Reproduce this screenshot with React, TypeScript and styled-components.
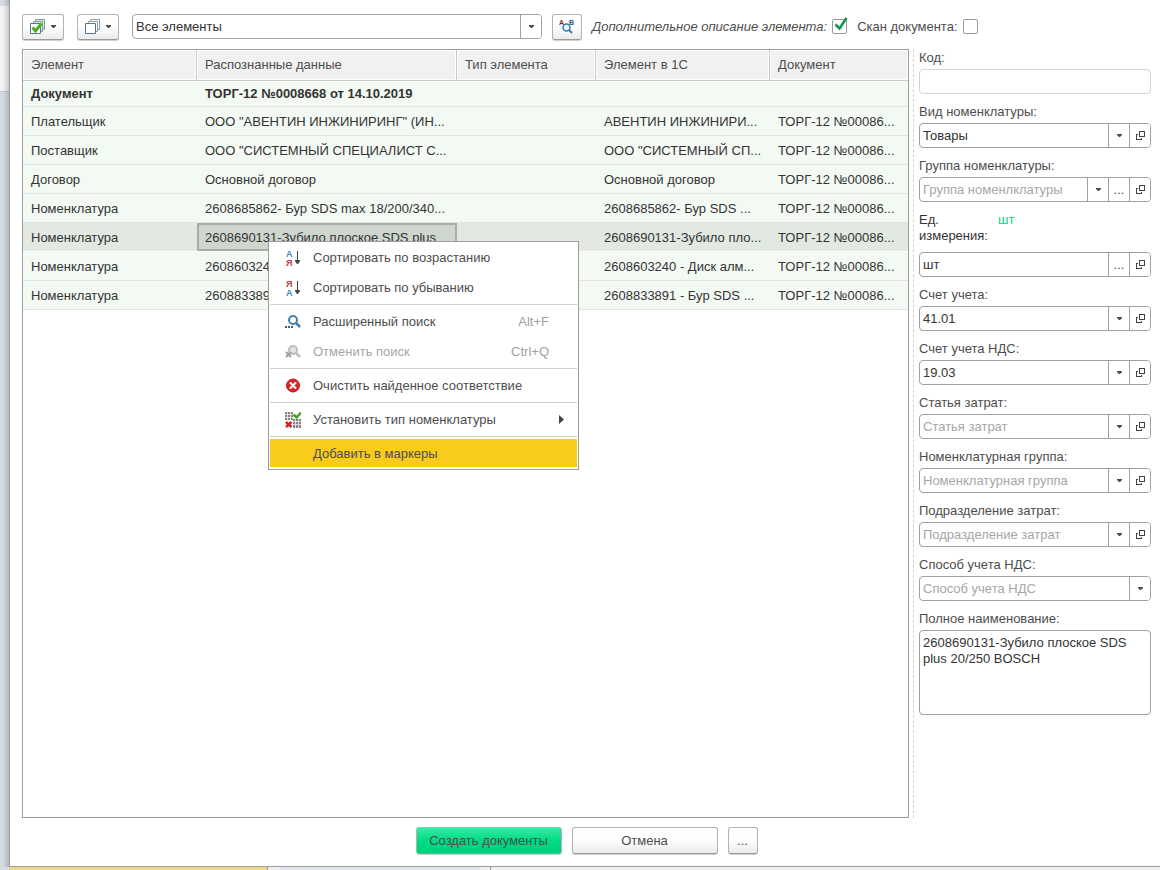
import React from "react";
import styled, { createGlobalStyle, css } from "styled-components";

const GlobalStyle = createGlobalStyle`
  *, *::before, *::after { box-sizing: border-box; }
  body { margin: 0; background: #d6dbe3; }
  body, button, input, select, textarea {
    font-family: "Liberation Sans", Arial, sans-serif;
    font-size: 13px;
    line-height: 16px;
    color: #333;
  }
`;

const Page = styled.div`
  min-height: 100vh;
  display: flex;
  flex-direction: column;
`;

const Stage = styled.div`
  flex: 1;
  display: flex;
`;

const Rail = styled.div`
  width: 9px;
  flex: none;
  background:
    linear-gradient(to right, transparent 30%, rgba(90, 95, 105, 0.28)),
    linear-gradient(#d6dbe3 0 6px, #f3f3f3 6px 91px, #c4c6ca 91px 92px, #d6dbe3 92px);
`;

const Window = styled.main`
  flex: 1;
  min-width: 0;
  display: flex;
  flex-direction: column;
  padding: 13px 9px 12px 12px;
  background: #fff;
  border-left: 1px solid #9d9d9d;
  border-bottom: 1px solid #9d9d9d;
`;

const BottomStrip = styled.div`
  height: 3px;
  display: flex;
  margin-left: 9px;
  background: #efeff0;
`;

const ActiveTab = styled.div`
  width: 259px;
  background: #ecd98c;
  border-right: 1px solid #a09a80;
`;

const IdleTab = styled.div`
  width: 223px;
  background: linear-gradient(to right, #efeff0 12px, #e1e4ea 12px 212px, #efeff0 212px);
  border-right: 1px solid #8d8d8d;
`;

const Toolbar = styled.div`
  display: flex;
  align-items: center;
  height: 27px;
  margin-bottom: 9px;
`;

const raised = css`
  border: 1px solid #b3b3b3;
  border-bottom-color: #9a9a9a;
  border-radius: 3px;
  background: linear-gradient(#fff 45%, #ebebeb);
  box-shadow: 0 1px 0 #d0d0d0;
`;

const ToolButton = styled.button<{ $width: number; $gap: number }>`
  ${raised}
  display: flex;
  align-items: center;
  justify-content: center;
  gap: 5px;
  flex: none;
  width: ${(p) => p.$width}px;
  height: 26px;
  margin-right: ${(p) => p.$gap}px;
  padding: 0;
`;

const FilterBox = styled.div`
  display: flex;
  width: 410px;
  margin-right: 10px;
`;

const Control = styled.div<{ $muted?: boolean }>`
  display: flex;
  flex: 1;
  min-width: 0;
  height: 25px;
  border: 1px solid ${(p) => (p.$muted ? "#d3d3d3" : "#a0a0a0")};
  border-radius: 4px;
  background: #fff;
  overflow: hidden;
`;

const entry = css`
  flex: 1;
  min-width: 0;
  border: 0;
  padding: 0 3px;
  background: transparent;
  outline: none;
`;

const Entry = styled.input`
  ${entry}
`;

const Picker = styled.select<{ $empty?: boolean }>`
  ${entry}
  appearance: none;
  color: ${(p) => (p.$empty ? "#a6a6a6" : "#333")};
`;

const SideButton = styled.button`
  display: flex;
  align-items: center;
  justify-content: center;
  flex: none;
  width: 21px;
  padding: 0;
  border: 0;
  border-left: 1px solid #a0a0a0;
  background: #fff;
  color: #4d4d4d;
`;

const CheckLabel = styled.label<{ $italic?: boolean }>`
  margin-right: 5px;
  white-space: nowrap;
  color: #4d4d4d;
  font-style: ${(p) => (p.$italic ? "italic" : "normal")};
`;

const CheckHolder = styled.span`
  position: relative;
  flex: none;
  width: 15px;
  height: 15px;
  margin-right: 10px;
`;

const CheckBox = styled.input`
  appearance: none;
  display: block;
  width: 15px;
  height: 15px;
  margin: 0;
  border: 1px solid #9a9a9a;
  border-radius: 2px;
  background: #fff;
`;

const Tick = styled.svg`
  position: absolute;
  left: 2px;
  top: -2px;
  pointer-events: none;
`;

const Body = styled.div`
  flex: 1;
  display: flex;
`;

const TablePanel = styled.section`
  position: relative;
  flex: 1;
  min-width: 0;
  border: 1px solid #9d9d9d;
`;

const Table = styled.table`
  width: 100%;
  table-layout: fixed;
  border-collapse: separate;
  border-spacing: 0;
`;

const Col = styled.col<{ $width?: number }>`
  width: ${(p) => (p.$width ? `${p.$width}px` : "auto")};
`;

const HeadCell = styled.th`
  height: 31px;
  padding: 0 8px;
  text-align: left;
  font-weight: normal;
  color: #4d4d4d;
  background: #f1f1f1;
  border-right: 1px solid #c8c8c8;
  border-bottom: 1px solid #c8c8c8;
  box-shadow: inset 0 0 0 1px #fff;
  &:last-child { border-right: 0; }
`;

const Row = styled.tr<{ $selected?: boolean; $bold?: boolean }>`
  height: ${(p) => (p.$bold ? 26 : 29)}px;
  font-weight: ${(p) => (p.$bold ? "bold" : "normal")};
  background: ${(p) => (p.$selected ? "#e1e9e2" : "#f3faf3")};
`;

const Cell = styled.td<{ $line: string; $current?: boolean }>`
  padding: 2px 2px 0 8px;
  border-bottom: 1px solid ${(p) => p.$line};
  white-space: nowrap;
  overflow: hidden;
  text-overflow: ellipsis;
  ${Row}:first-child & { padding-top: 0; }
  ${(p) =>
    p.$current &&
    css`
      background: #ced6ce;
      box-shadow: inset 0 0 0 2px #a7aea7;
    `}
`;

const Menu = styled.div`
  position: absolute;
  left: 245px;
  top: 191px;
  width: 311px;
  padding-bottom: 1px;
  border: 1px solid #9d9d9d;
  background: #fff;
`;

const MenuItem = styled.button<{ $active?: boolean }>`
  display: flex;
  align-items: center;
  width: 100%;
  height: 30px;
  padding: 1px 13px 0 15px;
  border: 1px solid #fff;
  background: ${(p) => (p.$active ? "#f9cc1c" : "#fff")};
  color: #4d4d4d;
  &:disabled { color: #a6a6a6; }
`;

const MenuIcon = styled.span`
  display: flex;
  width: 16px;
  margin-right: 12px;
`;

const MenuText = styled.span`
  flex: 1;
  text-align: left;
`;

const Shortcut = styled.span`
  margin-right: 15px;
  color: #a0a0a0;
`;

const MenuRule = styled.hr`
  height: 1px;
  margin: 2px 1px 1px;
  border: 0;
  background: #d3d1c6;
`;

const Details = styled.aside`
  flex: none;
  display: flex;
  flex-direction: column;
  gap: 8px;
  width: 238px;
  margin-left: 4px;
  padding: 1px 0 0 5px;
  border-left: 1px dashed #d3d3d3;
`;

const Field = styled.div<{ $gap?: number }>`
  display: flex;
  flex-direction: column;
  gap: ${(p) => p.$gap ?? 3}px;
  padding-bottom: 2px;
`;

const FieldLabel = styled.label`
  color: #4d4d4d;
`;

const ControlRow = styled.div`
  display: flex;
`;

const UnitRow = styled.div`
  display: flex;
  align-items: flex-start;
`;

const UnitLabel = styled.label`
  width: 79px;
`;

const UnitLink = styled.a`
  color: #00d886;
  text-decoration: none;
`;

const NameArea = styled.textarea`
  display: block;
  width: 100%;
  height: 85px;
  padding: 4px 3px;
  border: 1px solid #a0a0a0;
  border-radius: 4px;
  resize: none;
`;

const Footer = styled.footer`
  display: flex;
  justify-content: center;
  gap: 10px;
  margin-top: 9px;
`;

const FooterButton = styled.button<{ $width: number; $primary?: boolean }>`
  ${raised}
  width: ${(p) => p.$width}px;
  height: 27px;
  padding: 0;
  color: #4d4d4d;
  ${(p) => p.$primary && css`background: linear-gradient(#3ae9a4, #00dc85 50%, #00cf7c);`}
`;

const Caret = () => (
  <svg width="5" height="3" viewBox="0 0 5 3" aria-hidden="true">
    <path d="M0 0h5v1L3 3H2L0 1z" fill="#4d4d4d" />
  </svg>
);

const OpenIcon = () => (
  <svg width="9" height="9" viewBox="0 0 9 9" fill="none" stroke="#444" shapeRendering="crispEdges" aria-hidden="true">
    <path d="M3.5.5h5v5h-5zM2 3.500H.5v5h5V7" />
  </svg>
);

const StackIcon = ({ checked = false }: { checked?: boolean }) => (
  <svg width="16" height="16" viewBox="0 0 16 16" aria-hidden="true">
    <g fill={checked ? "#dcebe0" : "#fff"} stroke={checked ? "#7f9d91" : "#8ea0b0"}>
      <path d="M5.500.5h9v10h-9z" />
      <path d="M3.500 2.500h9v10h-9z" />
    </g>
    <path d="M.5 4.500h10v10H.5z" fill="#fff" stroke="#58748f" />
    {checked && (
      <path d="M2.500 8.500 5.500 12l6-7.500" fill="none" stroke="#47ae21" strokeWidth="3" />
    )}
  </svg>
);

const FindIcon = () => (
  <svg width="16" height="16" viewBox="0 0 16 16" aria-hidden="true">
    <g fontSize="7" fontWeight="bold">
      <text x="0" y="6" fill="#8c1d18">A</text>
      <text x="10" y="6" fill="#175785">B</text>
    </g>
    <circle cx="7.500" cy="8.500" r="3.500" fill="#eef6fc" stroke="#367fb1" strokeWidth="1.500" />
    <path d="m10 11 3 3" stroke="#367fb1" strokeWidth="2" />
  </svg>
);

const SortIcon = ({ descending = false }: { descending?: boolean }) => (
  <svg width="16" height="20" viewBox="0 0 16 20" aria-hidden="true">
    <g fontSize="9" fontWeight="bold">
      <text x="1" y="9" fill={descending ? "#c53a3a" : "#3c8bc9"}>{descending ? "Я" : "А"}</text>
      <text x="1" y="18" fill={descending ? "#3c8bc9" : "#c53a3a"}>{descending ? "А" : "Я"}</text>
    </g>
    <path d="M12.500 3v11" stroke="#444" />
    <path d="M10 12h5v1l-2 3h-1l-2-3z" fill="#444" />
  </svg>
);

const SearchIcon = ({ cancelled = false }: { cancelled?: boolean }) => (
  <svg width="16" height="16" viewBox="0 0 16 16" fill="none" aria-hidden="true">
    <circle cx="8" cy="6" r="4" fill={cancelled ? "#e3e3e3" : "#fff"} stroke={cancelled ? "#bdbdbd" : "#4680a9"} strokeWidth="2" />
    <path d="m11 9 4 4" stroke={cancelled ? "#bdbdbd" : "#4680a9"} strokeWidth="2.500" />
    {cancelled ? (
      <path d="m1 8 5 5M6 8l-5 5" stroke="#a39b95" strokeWidth="2" />
    ) : (
      <path d="M0 13h2M3 13h2M6 13h2" stroke="#3d5f7d" strokeWidth="2" />
    )}
  </svg>
);

const ClearIcon = () => (
  <svg width="16" height="16" viewBox="0 0 16 16" aria-hidden="true">
    <circle cx="8" cy="7.500" r="6.500" fill="#dc2525" stroke="#b81d1d" />
    <path d="m5.500 5 5 5m0-5-5 5" stroke="#fff" strokeWidth="2" strokeLinecap="round" />
  </svg>
);

const TypeIcon = () => (
  <svg width="16" height="16" viewBox="0 0 16 16" aria-hidden="true">
    <path d="M0 0h8v8H0zM8 7h8v9H8z" fill="#858585" />
    <path d="M0 2.500h8M0 5.500h8M2.500 0v8M5.500 0v8M8 9.500h8M8 12.500h8M10.500 7v9M13.500 7v9" stroke="#dedede" />
    <path d="m8.500 2.500 3 3 4.500-5" fill="none" stroke="#3fa61c" strokeWidth="2.500" />
    <path d="m1 10 5.500 5m0-5L1 15" stroke="#d32020" strokeWidth="2.500" />
  </svg>
);

const headings = ["Элемент", "Распознанные данные", "Тип элемента", "Элемент в 1С", "Документ"];

const DOC = "ТОРГ-12 №00086...";

const rows = [
  ["Плательщик", "ООО \"АВЕНТИН ИНЖИНИРИНГ\" (ИН...", "", "АВЕНТИН ИНЖИНИРИ...", DOC],
  ["Поставщик", "ООО \"СИСТЕМНЫЙ СПЕЦИАЛИСТ С...", "", "ООО \"СИСТЕМНЫЙ СП...", DOC],
  ["Договор", "Основной договор", "", "Основной договор", DOC],
  ["Номенклатура", "2608685862- Бур SDS max 18/200/340...", "", "2608685862- Бур SDS ...", DOC],
  ["Номенклатура", "2608690131-Зубило плоское SDS plus", "", "2608690131-Зубило пло...", DOC],
  ["Номенклатура", "260860324", "", "2608603240 - Диск алм...", DOC],
  ["Номенклатура", "260883389", "", "2608833891 - Бур SDS ...", DOC],
];
const SELECTED = 4;

type FieldSpec = { id: string; label: string; value?: string; hint?: string; more?: boolean; open?: boolean };

const accountFields: FieldSpec[] = [
  { id: "account", label: "Счет учета:", value: "41.01", open: true },
  { id: "vat-account", label: "Счет учета НДС:", value: "19.03", open: true },
  { id: "cost-item", label: "Статья затрат:", hint: "Статья затрат", open: true },
  { id: "item-group", label: "Номенклатурная группа:", hint: "Номенклатурная группа", open: true },
  { id: "cost-unit", label: "Подразделение затрат:", hint: "Подразделение затрат", open: true },
  { id: "vat-method", label: "Способ учета НДС:", hint: "Способ учета НДС" },
];

const PickerField = ({ id, label, value, hint, more, open }: FieldSpec) => (
  <Field>
    <FieldLabel htmlFor={id}>{label}</FieldLabel>
    <ControlRow>
      <Control>
        <Picker id={id} $empty={!value}>
          <option>{value ?? hint}</option>
        </Picker>
        <SideButton type="button" aria-label="Выбрать"><Caret /></SideButton>
        {more && <SideButton type="button">...</SideButton>}
        {open && <SideButton type="button" aria-label="Открыть"><OpenIcon /></SideButton>}
      </Control>
    </ControlRow>
  </Field>
);

const ContextMenu = () => (
  <Menu role="menu">
    <MenuItem role="menuitem"><MenuIcon><SortIcon /></MenuIcon><MenuText>Сортировать по возрастанию</MenuText></MenuItem>
    <MenuItem role="menuitem"><MenuIcon><SortIcon descending /></MenuIcon><MenuText>Сортировать по убыванию</MenuText></MenuItem>
    <MenuRule />
    <MenuItem role="menuitem"><MenuIcon><SearchIcon /></MenuIcon><MenuText>Расширенный поиск</MenuText><Shortcut>Alt+F</Shortcut></MenuItem>
    <MenuItem role="menuitem" disabled><MenuIcon><SearchIcon cancelled /></MenuIcon><MenuText>Отменить поиск</MenuText><Shortcut>Ctrl+Q</Shortcut></MenuItem>
    <MenuRule />
    <MenuItem role="menuitem"><MenuIcon><ClearIcon /></MenuIcon><MenuText>Очистить найденное соответствие</MenuText></MenuItem>
    <MenuRule />
    <MenuItem role="menuitem">
      <MenuIcon><TypeIcon /></MenuIcon>
      <MenuText>Установить тип номенклатуры</MenuText>
      <svg width="5" height="9" viewBox="0 0 5 9" aria-hidden="true"><path d="M0 0l5 4.500L0 9z" fill="#444" /></svg>
    </MenuItem>
    <MenuRule />
    <MenuItem role="menuitem" $active><MenuIcon /><MenuText>Добавить в маркеры</MenuText></MenuItem>
  </Menu>
);

export default function App() {
  return (
    <Page>
      <GlobalStyle />
      <Stage>
        <Rail />
        <Window>
          <Toolbar>
            <ToolButton type="button" $width={42} $gap={13} aria-label="Отметить все"><StackIcon checked /><Caret /></ToolButton>
            <ToolButton type="button" $width={42} $gap={13} aria-label="Снять отметки"><StackIcon /><Caret /></ToolButton>
            <FilterBox>
              <Control>
                <Picker aria-label="Отбор элементов"><option>Все элементы</option></Picker>
                <SideButton type="button" aria-label="Выбрать"><Caret /></SideButton>
              </Control>
            </FilterBox>
            <ToolButton type="button" $width={30} $gap={10} aria-label="Найти"><FindIcon /></ToolButton>
            <CheckLabel htmlFor="extra" $italic>Дополнительное описание элемента:</CheckLabel>
            <CheckHolder>
              <CheckBox id="extra" type="checkbox" defaultChecked />
              <Tick width="14" height="14" viewBox="0 0 14 14" aria-hidden="true">
                <path d="m1.500 7.500 4 4L12.500 1" fill="none" stroke="#12964f" strokeWidth="2.500" />
              </Tick>
            </CheckHolder>
            <CheckLabel htmlFor="scan">Скан документа:</CheckLabel>
            <CheckHolder><CheckBox id="scan" type="checkbox" /></CheckHolder>
          </Toolbar>

          <Body>
            <TablePanel>
              <Table>
                <colgroup>
                  <Col $width={174} /><Col $width={260} /><Col $width={139} /><Col $width={174} /><Col />
                </colgroup>
                <thead>
                  <tr>{headings.map((h) => <HeadCell key={h}>{h}</HeadCell>)}</tr>
                </thead>
                <tbody>
                  <Row $bold>
                    <Cell $line="#e2e6e2">Документ</Cell>
                    <Cell $line="#e2e6e2" colSpan={4}>ТОРГ-12 №0008668 от 14.10.2019</Cell>
                  </Row>
                  {rows.map((cells, r) => (
                    <Row key={r} $selected={r === SELECTED}>
                      {cells.map((text, c) => (
                        <Cell key={c} $line={r === SELECTED ? "#fff" : "#e2e6e2"} $current={r === SELECTED && c === 1}>{text}</Cell>
                      ))}
                    </Row>
                  ))}
                </tbody>
              </Table>
              <ContextMenu />
            </TablePanel>

            <Details>
              <Field>
                <FieldLabel htmlFor="code">Код:</FieldLabel>
                <ControlRow><Control $muted><Entry id="code" type="text" /></Control></ControlRow>
              </Field>
              <PickerField id="kind" label="Вид номенклатуры:" value="Товары" open />
              <PickerField id="group" label="Группа номенклатуры:" hint="Группа номенлклатуры" more open />
              <Field $gap={8}>
                <UnitRow>
                  <UnitLabel htmlFor="unit">Ед. измерения:</UnitLabel>
                  <UnitLink href="#unit">шт</UnitLink>
                </UnitRow>
                <ControlRow>
                  <Control>
                    <Entry id="unit" type="text" defaultValue="шт" />
                    <SideButton type="button">...</SideButton>
                    <SideButton type="button" aria-label="Открыть"><OpenIcon /></SideButton>
                  </Control>
                </ControlRow>
              </Field>
              {accountFields.map((f) => <PickerField key={f.id} {...f} />)}
              <Field>
                <FieldLabel htmlFor="full-name">Полное наименование:</FieldLabel>
                <NameArea id="full-name" defaultValue="2608690131-Зубило плоское SDS plus 20/250 BOSCH" />
              </Field>
            </Details>
          </Body>

          <Footer>
            <FooterButton type="button" $width={146} $primary>Создать документы</FooterButton>
            <FooterButton type="button" $width={146}>Отмена</FooterButton>
            <FooterButton type="button" $width={30}>...</FooterButton>
          </Footer>
        </Window>
      </Stage>
      <BottomStrip><ActiveTab /><IdleTab /></BottomStrip>
    </Page>
  );
}
